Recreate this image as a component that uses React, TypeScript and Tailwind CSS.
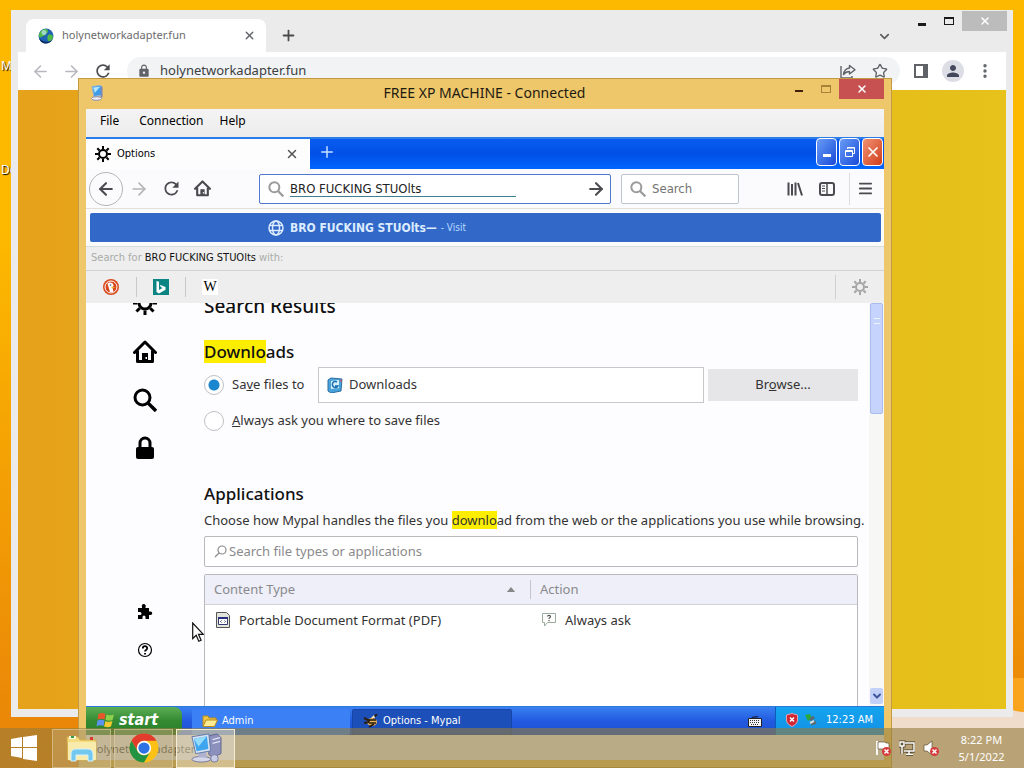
import type { ReactNode } from "react";
import {
  ArrowLeft,
  ArrowRight,
  ChevronDown,
  Menu,
  MoreVertical,
  Plus,
  Star,
  X,
} from "lucide-react";
import { MdLock, MdPerson, MdRefresh } from "react-icons/md";

function Gear({ className }: { className?: string }) {
  return (
    <svg viewBox="0 0 16 16" className={className} aria-hidden="true">
      <circle cx="8" cy="8" r="4" fill="none" stroke="currentColor" strokeWidth="2" />
      <path
        d="M8 0v3M8 13v3M0 8h3M13 8h3M2.3 2.3l2.2 2.2M11.5 11.5l2.2 2.2M2.3 13.7l2.2-2.2M11.5 4.5l2.2-2.2"
        stroke="currentColor"
        strokeWidth="2"
      />
    </svg>
  );
}

function House({ className }: { className?: string }) {
  return (
    <svg viewBox="0 0 24 24" className={className} aria-hidden="true">
      <path
        d="M1.5 12.5 12 2l10.5 10.5M4.5 11v10.5h15V11"
        fill="none"
        stroke="currentColor"
        strokeWidth="3"
        strokeLinejoin="round"
        strokeLinecap="round"
      />
      <path d="M9 13h6v9H9z" fill="currentColor" />
      <path d="M12.5 17h1.5v2h-1.5z" fill="#fff" />
    </svg>
  );
}

function Magnifier({ className }: { className?: string }) {
  return (
    <svg viewBox="0 0 24 24" className={className} aria-hidden="true">
      <circle cx="9.5" cy="9.5" r="7.5" fill="none" stroke="currentColor" strokeWidth="3" />
      <path d="m15 15 8 8" stroke="currentColor" strokeWidth="3.4" />
    </svg>
  );
}

function RemoteIcon({ className }: { className?: string }) {
  return (
    <svg viewBox="0 0 36 32" className={className} aria-hidden="true">
      <path d="m21 3 9-2 4 4v17l-9 4-4-3z" fill="#8c90bd" stroke="#60638f" />
      <path d="m25 7 8-2M25 11l8-2" stroke="#dfe2f5" strokeWidth="1.5" />
      <ellipse cx="13" cy="28" rx="10" ry="3" fill="#d5d6e8" stroke="#74779f" />
      <path d="m10 20 8-1 1 7h-9z" fill="#aeb2cf" />
      <path d="m3 4 18-3 2 18-16 3z" fill="#d9e3f2" stroke="#5d76a5" />
      <path d="m5 6 14-2.500 1.500 13.500-12.500 2.500z" fill="#3fa5ee" />
      <path d="m5 6 14-2.500-9 11z" fill="#93dcfb" />
      <circle cx="27" cy="27" r="4" fill="#c9cce6" stroke="#74779f" />
    </svg>
  );
}

function SessionIcon({ className }: { className?: string }) {
  return (
    <svg viewBox="0 0 14 16" className={className} aria-hidden="true">
      <path d="m2 1.500 9-1 .8 9.500L4 11.500z" fill="#3d9be8" stroke="#8fb4dc" />
      <path d="m3 2.500 7-.8-5 6z" fill="#b5e6fb" />
      <path d="m11 1 1.500 1v10l-2 1.500" fill="#7f86b5" />
      <ellipse cx="6.500" cy="13.500" rx="5" ry="1.800" fill="#f0f0f6" stroke="#8a8daf" />
    </svg>
  );
}

function ChromeTab() {
  return (
    <header className="flex h-[42px] shrink-0 items-end pl-2">
      <div className="flex h-[33px] w-60 items-center rounded-t-lg bg-white pr-2.5 pl-3">
        <svg viewBox="0 0 16 16" className="size-4 shrink-0" aria-hidden="true">
          <circle cx="8" cy="8" r="7.500" fill="#1d62b5" />
          <path d="M3 3c3-3 7-2 7 0s-2 2-3 4-4 1-5 3C0 8 1 5 3 3zM10 7c3-1 5 0 5 2s-2 4-4 5c-2-2-2-5-1-7z" fill="#52b848" />
          <path d="M1 10c3 4 9 5 13 2-3 5-11 5-13-2z" fill="#0d2c5e" />
          <circle cx="6" cy="4.500" r="2.500" fill="#bfe8f5" opacity=".7" />
        </svg>
        <span className="ml-2 flex-1 text-[11px] text-[#6b6b6b]">holynetworkadapter.fun</span>
        <button aria-label="Close tab" className="text-[#5f6368]">
          <X size={13} strokeWidth={2.5} />
        </button>
      </div>
      <button aria-label="New tab" className="mb-2 ml-3.5 text-[#4b4b4b]">
        <Plus size={17} strokeWidth={2.5} />
      </button>
      <button aria-label="Search tabs" className="mr-[114px] mb-2 ml-auto text-[#5a5a5a]">
        <ChevronDown size={15} strokeWidth={2.5} />
      </button>
    </header>
  );
}

function ChromeWindow() {
  return (
    <section className="absolute inset-x-[11px] top-2.5 bottom-[51px] flex flex-col border-x-[7px] border-b-8 border-[#ebebeb] bg-[#ebebeb]">
      <div className="absolute top-px -right-px flex items-center text-[#1a1a1a]">
        <button aria-label="Minimize" className="flex h-5 w-[27px] items-center justify-center">
          <span className="mt-1.5 h-[3px] w-2 bg-current" />
        </button>
        <button aria-label="Maximize" className="flex h-5 w-[27px] items-center justify-center">
          <span className="h-2 w-2.5 border border-t-2 border-current" />
        </button>
        <button aria-label="Close" className="flex h-5 w-[45px] items-center justify-center bg-[#bcbcbc] text-white">
          <X size={12} strokeWidth={3} />
        </button>
      </div>
      <ChromeTab />
      <nav className="flex h-[38px] shrink-0 items-center bg-white pr-3 pl-[13px] text-[#5f6368]">
        <button aria-label="Back" className="text-[#b8b8be]"><ArrowLeft size={19} /></button>
        <button aria-label="Forward" className="ml-3 text-[#b8b8be]"><ArrowRight size={19} /></button>
        <button aria-label="Reload" className="ml-3 text-[#4b4b50]"><MdRefresh size={20} /></button>
        <div className="mr-3.5 ml-3.5 flex h-7 flex-1 items-center rounded-full bg-[#f1f3f4] pr-3 pl-2.5">
          <MdLock size={14} />
          <input
            aria-label="Page address"
            defaultValue="holynetworkadapter.fun"
            className="ml-[9px] min-w-0 flex-1 bg-transparent text-[13px] text-[#3c4043] outline-none"
          />
          <svg viewBox="0 0 16 16" className="size-4" fill="none" stroke="currentColor" strokeWidth="1.400" aria-hidden="true">
            <path d="M1 3v12h11v-2" />
            <path d="M9.500 2.500v2.500C5.500 5.500 4 8 3.500 11.500 5.500 9 7 8.500 9.500 8.500V11L15 6.700z" strokeLinejoin="round" />
          </svg>
          <Star size={16} className="ml-4" />
        </div>
        <svg viewBox="0 0 14 14" className="size-3.5" aria-hidden="true">
          <path d="M1 1h12v12H1z" fill="none" stroke="currentColor" strokeWidth="2" />
          <path d="M9 1h4v12H9z" fill="currentColor" />
        </svg>
        <span className="ml-3.5 flex size-[22px] items-center justify-center rounded-full bg-[#dddde6] text-[#44485c]">
          <MdPerson size={18} />
        </span>
        <button aria-label="Browser menu" className="ml-3"><MoreVertical size={18} strokeWidth={2.5} /></button>
      </nav>
      <div className="flex-1 bg-linear-to-r from-[#e6a21a] to-[#e6c21a]" />
    </section>
  );
}

function RemoteTitleBar() {
  return (
    <header className="flex h-[30px] shrink-0 items-start text-[#1f1a10]">
      <SessionIcon className="mt-1.5 ml-1 h-4 w-3.5" />
      <h1 className="flex-1 pt-1 pl-20 text-center text-sm">FREE XP MACHINE - Connected</h1>
      <button aria-label="Minimize session" className="flex h-5 w-[27px] items-center justify-center">
        <span className="mt-1 h-[2px] w-2 bg-[#40200c]" />
      </button>
      <button aria-label="Maximize session" className="flex h-5 w-[27px] items-center justify-center">
        <span className="h-2 w-2.5 border border-t-2 border-[#a8813a]" />
      </button>
      <button aria-label="Close session" className="flex h-5 w-[45px] items-center justify-center bg-[#c75050] text-white">
        <X size={12} strokeWidth={3} />
      </button>
    </header>
  );
}

function XpTitleBar() {
  return (
    <header className="flex h-8 shrink-0 items-center border-t-2 border-[#2a7de8] bg-linear-to-b from-[#0a5cf0] via-[#0250e6] to-[#0066ff]">
      <div className="flex h-full w-56 items-center bg-[#fdfdfe] pr-[11px] pl-[9px]">
        <Gear className="size-4" />
        <span className="ml-1.5 flex-1 text-[11px]">Options</span>
        <button aria-label="Close options tab" className="text-[#555]">
          <X size={14} strokeWidth={2.5} />
        </button>
      </div>
      <button aria-label="Open new tab" className="mb-1 ml-2 text-[#c4e0ff]">
        <Plus size={18} />
      </button>
      <div className="mr-px mb-1 ml-auto flex gap-0.5">
        <button aria-label="Minimize browser" className="flex h-7 w-[21px] items-end justify-center rounded border border-white bg-linear-to-br from-[#6a9bf5] to-[#1a48d8] pb-2">
          <span className="h-[3px] w-2 bg-white" />
        </button>
        <button aria-label="Restore browser" className="flex h-7 w-[21px] items-center justify-center rounded border border-white bg-linear-to-br from-[#6a9bf5] to-[#1a48d8]">
          <svg viewBox="0 0 12 12" className="size-3" fill="none" stroke="#fff" aria-hidden="true">
            <path d="M3.500 3V1.500h7v6H9M1.500 4.500h7v6h-7zM1.500 5.500h7M3.500 2h7" />
          </svg>
        </button>
        <button aria-label="Close browser" className="flex h-7 w-[21px] items-center justify-center rounded border border-white bg-linear-to-br from-[#f09070] to-[#d03c14] text-white">
          <X size={16} strokeWidth={2.5} />
        </button>
      </div>
    </header>
  );
}

function XpToolbar() {
  return (
    <nav className="flex h-10 shrink-0 items-center border-b border-[#e4dfdc] bg-[#fbfafc] pr-2.5 pl-[3px] text-[#4b4b4f]">
      <button aria-label="Go back" className="flex size-[34px] items-center justify-center rounded-full border border-[#b5b5b8]">
        <ArrowLeft size={20} strokeWidth={2.5} />
      </button>
      <button aria-label="Go forward" className="ml-1.5 text-[#b4b4b6]"><ArrowRight size={20} /></button>
      <button aria-label="Reload page" className="ml-3"><MdRefresh size={21} /></button>
      <button aria-label="Home page" className="ml-3"><House className="size-[17px]" /></button>
      <div className="ml-12 flex h-[30px] flex-1 items-center rounded-xs border border-[#5078cc] bg-white pr-1 pl-2">
        <Magnifier className="size-4 shrink-0 text-[#9a9a9c]" />
        <input
          aria-label="Search or enter address"
          defaultValue="BRO FUCKING STUOlts"
          className="mt-px ml-1.5 h-4 w-[226px] border-b border-[#3f8090] bg-transparent text-[13px] leading-4 text-[#222] outline-none"
        />
        <button aria-label="Go to address" className="ml-auto"><ArrowRight size={20} strokeWidth={2.5} /></button>
      </div>
      <div className="mr-12 ml-2.5 flex h-[30px] w-[118px] items-center rounded-xs border border-[#bcc4cc] bg-white px-2">
        <Magnifier className="size-4 shrink-0 text-[#9a9a9c]" />
        <input
          aria-label="Search the web"
          placeholder="Search"
          className="ml-1.5 w-full min-w-0 text-[13px] outline-none placeholder:text-[#737373]"
        />
      </div>
      <button aria-label="Library">
        <svg viewBox="0 0 16 16" className="size-4" stroke="currentColor" strokeWidth="2" aria-hidden="true">
          <path d="M1.500 1.500v13M5 3v11.500M8.500 1.500v13M11 2l4 12.500" />
        </svg>
      </button>
      <button aria-label="Sidebars" className="ml-4">
        <svg viewBox="0 0 16 16" className="size-4" fill="none" stroke="currentColor" strokeWidth="2" aria-hidden="true">
          <rect x="1" y="2" width="14" height="12" rx="2" />
          <path d="M8 2v12" strokeWidth="1.500" />
          <path d="M3 5h3M3 7.500h3M3 10h3" strokeWidth="1" />
        </svg>
      </button>
      <span className="mr-[7px] ml-3.5 h-8 w-px bg-[#dcdcde]" />
      <button aria-label="Open menu"><Menu size={17} strokeWidth={2.5} /></button>
    </nav>
  );
}

function Suggestions() {
  return (
    <div className="shrink-0 bg-[#eeeeee]">
      <div className="border-b border-[#d5dcdc] bg-[#fbfbfb] pt-1 pr-[3px] pb-1 pl-1">
        <a href="#visit" className="flex h-[29px] items-center rounded-xs bg-[#3268c8] pl-[178px] text-white">
          <svg viewBox="0 0 16 16" className="size-4" fill="none" stroke="#dcecff" strokeWidth="1.500" aria-hidden="true">
            <circle cx="8" cy="8" r="7" />
            <ellipse cx="8" cy="8" rx="3.500" ry="7" />
            <path d="M2 5.500h12M2 10.500h12" />
          </svg>
          <span className="ml-1.5 text-xs font-bold text-[#dcecff]">BRO FUCKING STUOlts—</span>
          <span className="ml-1 text-[10px] text-[#b8dcff]">- Visit</span>
        </a>
      </div>
      <p className="flex h-6 items-center gap-[3px] border-b border-[#d2d2d2] pl-[5px] text-[11px] text-[#a9aca9]">
        Search for <span className="text-[#111]">BRO FUCKING STUOlts</span> with:
      </p>
      <div className="flex h-8 items-center">
        <button aria-label="DuckDuckGo" className="flex w-[50px] justify-center">
          <svg viewBox="0 0 16 16" className="size-4" aria-hidden="true">
            <circle cx="8" cy="8" r="8" fill="#d9481c" />
            <circle cx="8" cy="8" r="6" fill="none" stroke="#fff" />
            <path d="M4.500 4.500c2-2 6-1 6 2l-1 2 1 4.500H7z" fill="#fff" />
            <circle cx="7.500" cy="6" r=".8" fill="#35598a" />
            <path d="m8.500 7.500 4 1-4 1z" fill="#f2b632" />
          </svg>
        </button>
        <button aria-label="Bing" className="flex h-5 w-[50px] items-center justify-center border-x border-[#c8c8c8]">
          <svg viewBox="0 0 16 16" className="size-4" aria-hidden="true">
            <path d="M0 0h16v16H0z" fill="#0c8484" />
            <path d="M3.500 2 6 2.800v8.200l3.500-2-1.700-.9-1-2.300L12.500 8v2.800L6 14.500 3.500 13z" fill="#fff" />
          </svg>
        </button>
        <button aria-label="Wikipedia" className="ml-4 size-4 bg-white font-['Liberation_Serif',serif] text-sm leading-4 text-black">
          W
        </button>
        <span className="ml-auto h-6 w-px bg-[#cfcfcf]" />
        <button aria-label="Change search settings" className="mr-4 ml-4 text-[#a5a5a5]">
          <Gear className="size-4" />
        </button>
      </div>
    </div>
  );
}

function Sidebar() {
  return (
    <aside className="flex w-[118px] shrink-0 flex-col items-center overflow-hidden text-black">
      <Gear className="-mt-3 size-6 shrink-0" />
      <House className="mt-[25px] size-6 shrink-0" />
      <Magnifier className="mt-6 size-6 shrink-0" />
      <svg viewBox="0 0 24 24" className="mt-6 size-6 shrink-0" aria-hidden="true">
        <path d="M7 12V7a5 5 0 0 1 10 0v5" fill="none" stroke="currentColor" strokeWidth="3" />
        <rect x="3" y="11" width="18" height="12" rx="2" fill="currentColor" />
      </svg>
      <svg viewBox="0 0 16 16" className="mt-auto size-4 shrink-0" aria-hidden="true">
        <path
          d="M1 4h4V3a2 2 0 1 1 3.500 0v1H12v3.500h1.500a1.500 1.500 0 0 1 0 3.500H12V15H8.500v-2a1.500 1.500 0 0 0-3 0v2H1v-4h2a1.500 1.500 0 0 0 0-3H1z"
          fill="currentColor"
        />
      </svg>
      <svg viewBox="0 0 16 16" className="mt-[22px] mb-12 size-4 shrink-0" fill="none" stroke="currentColor" aria-hidden="true">
        <circle cx="8" cy="8" r="6.500" strokeWidth="1.200" />
        <path d="M5.800 6.500c0-3 4.400-3 4.400-.3C10.200 8 8 7.800 8 9.500M8 11v1.500" strokeWidth="1.800" />
      </svg>
    </aside>
  );
}

function Mark({ children }: { children: ReactNode }) {
  return <mark className="bg-[#fdee00] text-inherit">{children}</mark>;
}

function OptionsPage() {
  return (
    <main className="min-w-0 flex-1 font-['Noto_Sans',sans-serif] text-[13px] text-[#333]">
      <h2 className="-mt-[9px] text-[19px] leading-6 font-medium text-[#111]">Search Results</h2>
      <h3 className="mt-6 text-[17px] leading-5 font-medium text-[#111]">
        <Mark>Downlo</Mark>ads
      </h3>
      <div className="mt-[5px] flex h-9 items-center">
        <input
          id="save"
          type="radio"
          name="where"
          defaultChecked
          className="size-5 appearance-none rounded-full border border-[#c0c0c4] bg-white checked:bg-[radial-gradient(circle,#1a86d0_5px,#fff_6px)]"
        />
        <label htmlFor="save" className="ml-2 w-[86px]">
          Sa<u>v</u>e files to
        </label>
        <div className="flex h-full flex-1 items-center border border-[#c8c8cc] bg-white px-2">
          <svg viewBox="0 0 16 16" className="size-4 shrink-0" aria-hidden="true">
            <path d="m1 3 3-2 11 1-1 12-10 2-3-2z" fill="#4aa3d8" stroke="#2b6ea3" />
            <path d="m4 4 8-1v8l-8 1z" fill="#d2effa" />
            <path d="M10 5a3 3 0 1 0 1 4H8" fill="none" stroke="#1a6fb0" strokeWidth="1.500" />
            <path d="m12 4 3-2v3z" fill="#b05a78" />
          </svg>
          <input aria-label="Download folder" readOnly defaultValue="Downloads" className="ml-1.5 w-full min-w-0 outline-none" />
        </div>
        <button className="ml-1 h-8 w-[150px] bg-[#e6e5e8]">
          Br<u>o</u>wse...
        </button>
      </div>
      <div className="mt-1.5 flex h-6 items-center">
        <input id="ask" type="radio" name="where" className="size-5 appearance-none rounded-full border border-[#c0c0c4] bg-white" />
        <label htmlFor="ask" className="ml-2">
          <u>A</u>lways ask you where to save files
        </label>
      </div>
      <h3 className="mt-[51px] text-[17px] leading-5 font-medium text-[#111]">Applications</h3>
      <p className="mt-1.5 leading-5 whitespace-nowrap">
        Choose how Mypal handles the files you <Mark>downlo</Mark>ad from the web or the applications you use while browsing.
      </p>
      <div className="mt-1.5 flex h-[31px] items-center rounded-xs border border-[#b9b9bd] bg-white px-2">
        <svg viewBox="0 0 16 16" className="size-4 shrink-0" fill="none" stroke="#8c8c8c" strokeWidth="1.200" aria-hidden="true">
          <circle cx="9" cy="6" r="4" />
          <path d="m6 9-4 4" />
        </svg>
        <input
          aria-label="Filter applications"
          placeholder="Search file types or applications"
          className="w-full min-w-0 outline-none placeholder:text-[#8a8a8c]"
        />
      </div>
      <div className="mt-[7px] h-40 rounded-t-xs border border-[#b9b9bd] bg-white">
        <table className="w-full table-fixed text-left">
          <thead className="bg-[#eeeff8] text-[#8a8a8e]">
            <tr className="h-[29px] border-b border-[#d0d2d8]">
              <th className="w-1/2 pl-[9px] font-normal">
                <div className="flex items-center border-r border-[#c4c4cc] pr-3.5">
                  Content Type
                  <svg viewBox="0 0 10 6" className="ml-auto h-[5px] w-2.5" aria-hidden="true">
                    <path d="M0 6 5 0l5 6z" fill="#888" />
                  </svg>
                </div>
              </th>
              <th className="pl-[9px] font-normal">Action</th>
            </tr>
          </thead>
          <tbody>
            <tr className="h-8">
              <td className="pl-2.5">
                <div className="flex items-center gap-2">
                  <svg viewBox="0 0 16 16" className="size-4" aria-hidden="true">
                    <path d="M1.500.5h10l3 3v12h-13z" fill="#e4e4dc" stroke="#555" />
                    <path d="M3.500 5.500h9v7h-9z" fill="#fff" stroke="#333a72" />
                    <path d="M3 5h10v2H3z" fill="#26307f" />
                    <path d="m6.500 8.500-1 1 1 1M9.500 8.500l1 1-1 1" fill="none" stroke="#333a72" />
                  </svg>
                  Portable Document Format (PDF)
                </div>
              </td>
              <td className="pl-2.5">
                <div className="flex items-center gap-2">
                  <svg viewBox="0 0 16 16" className="size-4" fill="none" stroke="#9cab9f" aria-hidden="true">
                    <path d="M1.500 1.500h13v9h-8l-3 3.500v-3.500h-2z" />
                    <path d="M6.500 4.500c0-1.500 3-1.500 3 0S8 5.500 8 7M8 8v1.200" stroke="#555" strokeWidth="1.200" />
                  </svg>
                  Always ask
                </div>
              </td>
            </tr>
          </tbody>
        </table>
      </div>
    </main>
  );
}

function PageScrollbar() {
  return (
    <div className="ml-[11px] flex w-[15px] shrink-0 flex-col items-center justify-between bg-[#f7f7f5]">
      <div className="flex h-[111px] w-[13px] items-start justify-center rounded-xs border border-[#aabcec] bg-[#c6d3fc] pt-3.5">
        <span className="h-1.5 w-1.5 border-y border-[#eef4fe]" />
      </div>
      <button aria-label="Scroll down" className="mb-0.5 flex h-4 w-[13px] items-center justify-center rounded-xs bg-[#c3d0f8] text-[#40549c]">
        <ChevronDown size={12} strokeWidth={4} />
      </button>
    </div>
  );
}

function XpTaskbar() {
  return (
    <footer className="flex h-[29px] shrink-0 border-t border-[#2c7ad8] bg-linear-to-b from-[#3a80f0] via-[#225ae0] to-[#1c50d0] text-[11px] text-white">
      <button className="flex w-24 items-center rounded-r-lg bg-linear-to-b from-[#5cae56] via-[#328a30] to-[#2c7c2c] pb-0.5 pl-2.5 text-base font-bold italic">
        <svg viewBox="0 0 18 16" className="mr-1 h-4 w-[19px]" aria-hidden="true">
          <path d="M2 2c3-1.500 5-1 7 0L8 7.500c-2-1-4-1-7 0z" fill="#e8572c" />
          <path d="M10 2.500c3 1.200 5 1 7.500 0l-1.500 5.500c-2 1-4 1-7 0z" fill="#8fd04a" />
          <path d="M1 8.500c3-1.200 5-1 7 0L7 14c-2-1-4-1-7 0z" fill="#5b92f0" />
          <path d="M9 9c3 1.200 5 1 7 0l-1.500 5.500c-2 1-4 1-7 0z" fill="#f5c832" />
        </svg>
        start
      </button>
      <button className="mt-0.5 ml-2.5 flex w-[158px] items-center gap-1 rounded-xs bg-[#3b80f4] pb-0.5 pl-2.5">
        <svg viewBox="0 0 16 14" className="h-3.5 w-4" aria-hidden="true">
          <path d="M1 12V2h5l1 2h7v3" fill="#f2c744" stroke="#b68a1e" />
          <path d="M1 12.500 4 6h11.500l-3 6.500z" fill="#fdec92" stroke="#b68a1e" />
        </svg>
        Admin
      </button>
      <button className="mt-0.5 ml-0.5 flex w-40 items-center gap-1 rounded-xs border border-[#1846a8] bg-[#1d4fb8] pb-0.5 pl-2.5">
        <svg viewBox="0 0 16 14" className="h-3.5 w-4" aria-hidden="true">
          <ellipse cx="9" cy="8" rx="5" ry="4" fill="#e8b456" />
          <path d="m1 4 6 3M1 9l5-1M10 4l4-4M6 13l5-3" stroke="#2c1d10" strokeWidth="2" />
          <path d="M6 6h7M6 9h7" stroke="#231810" strokeWidth="1.500" />
          <path d="m8 4 3-3 1 3z" fill="#f8ecce" />
        </svg>
        Options - Mypal
      </button>
      <svg viewBox="0 0 14 12" className="mt-2 mr-[13px] ml-auto h-3 w-3.5" aria-hidden="true">
        <path d="M4 3c0-2 6 0 6-2" fill="none" stroke="#111" />
        <path d="M.5 3.500h13v8H.5z" fill="#f4f4f4" stroke="#222" />
        <path d="M2 5.500h10M2 7.500h10M3 9.500h8" stroke="#333" strokeDasharray="1 1" />
      </svg>
      <div className="flex w-[109px] items-center border-l border-[#0b5cb8] bg-linear-to-b from-[#14a4f0] to-[#1490e4] pb-0.5 pl-2.5">
        <svg viewBox="0 0 12 14" className="h-3.5 w-3" aria-hidden="true">
          <path d="M6 .5 11.500 2v5c0 3-2.500 5-5.500 6.500C3 12 .5 10 .5 7V2z" fill="#cf2634" stroke="#e9a0a8" />
          <path d="m4 4.500 4 4m0-4-4 4" stroke="#fff" strokeWidth="1.500" />
        </svg>
        <svg viewBox="0 0 14 14" className="ml-1.5 size-3.5" aria-hidden="true">
          <path d="m1 2 5-1 2 4-4 3z" fill="#2aa839" />
          <path d="m6 7 4-3M7 11l5-2" stroke="#5a6a70" strokeWidth="3" />
          <path d="m6 10 4-2" stroke="#d4dcdc" strokeWidth="2" />
        </svg>
        <time className="ml-2 whitespace-nowrap">12:23 AM</time>
      </div>
    </footer>
  );
}

function RemoteWindow() {
  return (
    <section className="absolute top-[78px] right-[132px] bottom-0 left-[78px] flex flex-col border border-[#c29a45] bg-[#edc76a] px-[7px] pb-[7px]">
      <RemoteTitleBar />
      <nav className="flex h-7 shrink-0 items-center bg-linear-to-b from-[#f4f4f4] to-[#ececec] pb-1 pl-3.5 text-xs text-black">
        <button>File</button>
        <button className="ml-5">Connection</button>
        <button className="ml-4">Help</button>
      </nav>
      <div className="flex min-h-0 flex-1 flex-col bg-[#fbfbfd] font-['DejaVu_Sans_Condensed','DejaVu_Sans',sans-serif]">
        <XpTitleBar />
        <XpToolbar />
        <Suggestions />
        <div className="flex min-h-0 flex-1 overflow-hidden bg-[#fdfcfe]">
          <Sidebar />
          <OptionsPage />
          <PageScrollbar />
        </div>
        <XpTaskbar />
      </div>
      <p className="h-[25px] shrink-0 bg-[#f0f0f0] pt-1.5 pl-1 text-[11px] text-[#333]">holynetworkadapter</p>
    </section>
  );
}

function HostTaskbar() {
  return (
    <footer className="absolute inset-x-0 bottom-0 flex h-10 items-center bg-[#947d3e]/60 text-white">
      <button aria-label="Start" className="flex w-[52px] justify-center pr-1">
        <svg viewBox="0 0 28 26" className="h-[26px] w-7" fill="#fff" aria-hidden="true">
          <path d="m1 4 11-2v10H1zM13 2l14-2v12H13zM1 13h11v10L1 21zM13 13h14v13l-14-2z" />
        </svg>
      </button>
      <div className="flex h-[39px] gap-[3px]">
        <button aria-label="File Explorer" className="flex w-[59px] items-center justify-center border border-[#e0cfa0]/60 bg-white/15">
          <svg viewBox="0 0 32 28" className="h-7 w-8" aria-hidden="true">
            <path d="M1 3h11l2 3h16v20H2z" fill="#f4dc83" stroke="#d6ae4a" />
            <path d="M3 2h7v3H3z" fill="#fff8d6" />
            <path d="M5 2h3v2H5z" fill="#2f9e48" />
            <path d="M24 3h3v3h-3z" fill="#d63a2e" />
            <path d="M2 8h28v18H2z" fill="#f9ebab" />
            <path d="M5 27V20c0-4 3-5 5-5h12c3 0 5 2 5 5v7h-5v-6H10v6z" fill="#72c8ee" stroke="#d8f2fc" />
          </svg>
        </button>
        <button aria-label="Google Chrome" className="flex w-[59px] items-center justify-center border border-[#e0cfa0]/60 bg-white/15">
          <svg viewBox="0 0 48 48" className="size-[30px]" aria-hidden="true">
            <circle cx="24" cy="24" r="23" fill="#fbc116" />
            <path d="M4 12.500A23 23 0 0 1 44 12.500H24a11.500 11.500 0 0 0-10 17.200z" fill="#e33b2e" />
            <path d="M4 12.500A23 23 0 0 0 24 47l10-17.300a11.500 11.500 0 0 1-20 0z" fill="#229342" />
            <circle cx="24" cy="24" r="11.500" fill="#fff" />
            <circle cx="24" cy="24" r="9" fill="#2f72e4" />
          </svg>
        </button>
        <button aria-label="Remote Desktop" className="flex w-[59px] items-center justify-center border border-[#f6ecd0] bg-white/35">
          <RemoteIcon className="h-[30px] w-[34px]" />
        </button>
      </div>
      <div className="ml-auto flex items-center gap-2">
        <svg viewBox="0 0 16 16" className="size-4" aria-hidden="true">
          <path d="M2 1v14" stroke="#fff" strokeWidth="1.800" />
          <path d="M3 2h7l1 1h3v7H9L8 9H3z" fill="#fff" stroke="#4a3a20" strokeWidth=".6" />
          <circle cx="11.500" cy="11.500" r="4.500" fill="#d43c3c" />
          <path d="m9.500 9.500 4 4m0-4-4 4" stroke="#fff" strokeWidth="1.500" />
        </svg>
        <svg viewBox="0 0 16 16" className="size-4" fill="none" aria-hidden="true">
          <path d="M6 3h9v8H5M10 11v3M7 14.200h7M1 2h4v4H1zM3 6v8" stroke="#4a3a20" strokeWidth="3" />
          <path d="M6 3h9v8H5M10 11v3M7 14.200h7M1 2h4v4H1zM3 6v8" stroke="#fff" strokeWidth="1.500" />
        </svg>
        <svg viewBox="0 0 16 16" className="size-4" aria-hidden="true">
          <path d="M1 5h3l5-4v14l-5-4H1z" fill="#fff" stroke="#4a3a20" strokeWidth=".6" />
          <circle cx="11.500" cy="11.500" r="4.500" fill="#d43c3c" />
          <path d="m9.500 9.500 4 4m0-4-4 4" stroke="#fff" strokeWidth="1.500" />
        </svg>
      </div>
      <div className="w-[85px] text-center text-[11px] leading-[17px]">
        <time className="block">8:22 PM</time>
        <time className="block">5/1/2022</time>
      </div>
    </footer>
  );
}

export default function App() {
  return (
    <div className="relative h-screen w-full overflow-hidden bg-linear-to-b from-[#fdb900] from-30% to-[#e88208] font-['Noto_Sans',sans-serif]">
      <span className="absolute top-[58px] left-px text-xs text-white text-shadow-[1px_1px_1px_#000]">My</span>
      <span className="absolute top-[162px] left-px text-xs text-white text-shadow-[1px_1px_1px_#000]">De</span>
      <svg viewBox="0 0 144 90" preserveAspectRatio="none" className="absolute right-0 bottom-0 h-[90px] w-36" aria-hidden="true">
        <path d="M0 0h144v90H0z" fill="#f0dccb" />
        <path d="M126 0h18v34c-7 0-13-2-18-6z" fill="#f9a41c" />
      </svg>
      <ChromeWindow />
      <RemoteWindow />
      <svg viewBox="0 0 12 20" className="absolute top-[622px] left-48 h-5 w-3" aria-hidden="true">
        <path d="M.7 1v15.500l3.500-3.300 2.600 6 2.300-1-2.600-5.900h4.800z" fill="#fff" stroke="#111" strokeWidth="1.200" />
      </svg>
      <HostTaskbar />
    </div>
  );
}
